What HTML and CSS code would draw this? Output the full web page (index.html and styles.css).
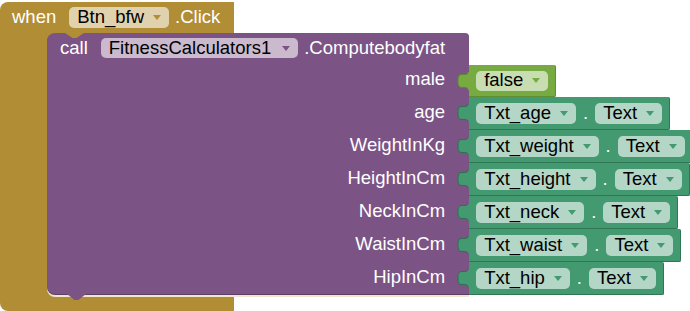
FILE: index.html
```html
<!DOCTYPE html>
<html>
<head>
<meta charset="utf-8">
<link rel="stylesheet" href="styles.css">
</head>
<body>
<div class="canvas">
  <div class="event">
    <div class="ev-head">
      <span class="lbl">when</span>
      <span class="field f-gold">Btn_bfw<i class="arr"></i></span>
      <span class="lbl tight">.Click</span>
    </div>
    <div class="ev-body">
      <div class="arm"></div>
      <div class="call">
        <div class="call-head">
          <span class="lbl">call</span>
          <span class="field f-purple">FitnessCalculators1<i class="arr"></i></span>
          <span class="lbl tight">.Computebodyfat</span>
        </div>
        <div class="arg-lbl">male</div>
        <div class="arg-lbl">age</div>
        <div class="arg-lbl">WeightInKg</div>
        <div class="arg-lbl">HeightInCm</div>
        <div class="arg-lbl">NeckInCm</div>
        <div class="arg-lbl">WaistInCm</div>
        <div class="arg-lbl">HipInCm</div>
      </div>
      <div class="args">
        <div class="vb logic">
          <svg class="tab" width="13" height="18" viewBox="0 0 13 18"><path class="tf" d="M13 0 H11 C11 3 8 2.5 5 2.5 C1.5 2.5 1 5 1 9 C1 13 1.5 15.5 5 15.5 C8 15.5 11 15 11 18 H13 Z"/><path class="ts" d="M11 0 C11 3 8 2.5 5 2.5 C1.5 2.5 1 5 1 9 C1 13 1.5 15.5 5 15.5 C8 15.5 11 15 11 18"/></svg>
          <span class="field f-logic">false<i class="arr"></i></span>
        </div>
        <div class="vb getter">
          <svg class="tab" width="13" height="18" viewBox="0 0 13 18"><path class="tf" d="M13 0 H11 C11 3 8 2.5 5 2.5 C1.5 2.5 1 5 1 9 C1 13 1.5 15.5 5 15.5 C8 15.5 11 15 11 18 H13 Z"/><path class="ts" d="M11 0 C11 3 8 2.5 5 2.5 C1.5 2.5 1 5 1 9 C1 13 1.5 15.5 5 15.5 C8 15.5 11 15 11 18"/></svg>
          <span class="field f-get">Txt_age<i class="arr"></i></span><span class="dot">.</span><span class="field f-get">Text<i class="arr"></i></span>
        </div>
        <div class="vb getter">
          <svg class="tab" width="13" height="18" viewBox="0 0 13 18"><path class="tf" d="M13 0 H11 C11 3 8 2.5 5 2.5 C1.5 2.5 1 5 1 9 C1 13 1.5 15.5 5 15.5 C8 15.5 11 15 11 18 H13 Z"/><path class="ts" d="M11 0 C11 3 8 2.5 5 2.5 C1.5 2.5 1 5 1 9 C1 13 1.5 15.5 5 15.5 C8 15.5 11 15 11 18"/></svg>
          <span class="field f-get">Txt_weight<i class="arr"></i></span><span class="dot">.</span><span class="field f-get">Text<i class="arr"></i></span>
        </div>
        <div class="vb getter">
          <svg class="tab" width="13" height="18" viewBox="0 0 13 18"><path class="tf" d="M13 0 H11 C11 3 8 2.5 5 2.5 C1.5 2.5 1 5 1 9 C1 13 1.5 15.5 5 15.5 C8 15.5 11 15 11 18 H13 Z"/><path class="ts" d="M11 0 C11 3 8 2.5 5 2.5 C1.5 2.5 1 5 1 9 C1 13 1.5 15.5 5 15.5 C8 15.5 11 15 11 18"/></svg>
          <span class="field f-get">Txt_height<i class="arr"></i></span><span class="dot">.</span><span class="field f-get">Text<i class="arr"></i></span>
        </div>
        <div class="vb getter">
          <svg class="tab" width="13" height="18" viewBox="0 0 13 18"><path class="tf" d="M13 0 H11 C11 3 8 2.5 5 2.5 C1.5 2.5 1 5 1 9 C1 13 1.5 15.5 5 15.5 C8 15.5 11 15 11 18 H13 Z"/><path class="ts" d="M11 0 C11 3 8 2.5 5 2.5 C1.5 2.5 1 5 1 9 C1 13 1.5 15.5 5 15.5 C8 15.5 11 15 11 18"/></svg>
          <span class="field f-get">Txt_neck<i class="arr"></i></span><span class="dot">.</span><span class="field f-get">Text<i class="arr"></i></span>
        </div>
        <div class="vb getter">
          <svg class="tab" width="13" height="18" viewBox="0 0 13 18"><path class="tf" d="M13 0 H11 C11 3 8 2.5 5 2.5 C1.5 2.5 1 5 1 9 C1 13 1.5 15.5 5 15.5 C8 15.5 11 15 11 18 H13 Z"/><path class="ts" d="M11 0 C11 3 8 2.5 5 2.5 C1.5 2.5 1 5 1 9 C1 13 1.5 15.5 5 15.5 C8 15.5 11 15 11 18"/></svg>
          <span class="field f-get">Txt_waist<i class="arr"></i></span><span class="dot">.</span><span class="field f-get">Text<i class="arr"></i></span>
        </div>
        <div class="vb getter">
          <svg class="tab" width="13" height="18" viewBox="0 0 13 18"><path class="tf" d="M13 0 H11 C11 3 8 2.5 5 2.5 C1.5 2.5 1 5 1 9 C1 13 1.5 15.5 5 15.5 C8 15.5 11 15 11 18 H13 Z"/><path class="ts" d="M11 0 C11 3 8 2.5 5 2.5 C1.5 2.5 1 5 1 9 C1 13 1.5 15.5 5 15.5 C8 15.5 11 15 11 18"/></svg>
          <span class="field f-get">Txt_hip<i class="arr"></i></span><span class="dot">.</span><span class="field f-get">Text<i class="arr"></i></span>
        </div>
      </div>
    </div>
    <div class="ev-foot"></div>
  </div>
</div>
</body>
</html>
```

FILE: styles.css
```css
html, body {
  margin: 0;
  background: #ffffff;
}
body {
  font-family: "Liberation Sans", Arial, sans-serif;
  font-size: 18.5px;
  line-height: 1;
}
.canvas {
  padding-top: 2px;
}
.event {
  display: flex;
  flex-direction: column;
  align-items: flex-start;
}
.ev-head {
  display: flex;
  align-items: center;
  width: 234px;
  height: 31px;
  box-sizing: border-box;
  background: #b18e35;
  border-top-left-radius: 8px;
  padding: 0 12px 0 12px;
}
.lbl {
  color: #ffffff;
  white-space: nowrap;
}
.field {
  display: inline-flex;
  align-items: center;
  height: 21px;
  box-sizing: border-box;
  padding: 0 8px;
  border-radius: 5px;
  color: #000000;
  white-space: nowrap;
  margin-left: 13px;
}
.tight {
  margin-left: 6px;
}
.arr {
  display: inline-block;
  width: 0;
  height: 0;
  margin-left: 9px;
  border-left: 4px solid transparent;
  border-right: 4px solid transparent;
  border-top: 5px solid #888;
}
.f-gold {
  background: #e0d2ae;
}
.f-gold .arr {
  border-top-color: #b18e35;
}
.f-purple {
  background: #cbbace;
  height: 20px;
}
.f-purple .arr {
  border-top-color: #7c5385;
  margin-left: 11px;
}
.f-logic {
  background: #c9ddb3;
  height: 20px;
  margin-left: 0;
}
.f-logic .arr {
  border-top-color: #77ab41;
}
.f-get {
  background: #b4d6c6;
  margin-left: 0;
}
.f-get .arr {
  border-top-color: #439970;
}
.ev-body {
  display: flex;
  align-items: flex-start;
}
.arm {
  width: 55px;
  align-self: stretch;
  background: #b18e35;
}
.call {
  margin-left: -8px;
  position: relative;
  z-index: 1;
  background: #7c5385;
  border-radius: 8px 4px 0 8px;
  display: grid;
  grid-template-rows: 30px repeat(7, 33px);
  justify-items: end;
  padding: 0 24px 0 13px;
  box-shadow: 0 1px 0 #5e3d67, 0 3px 0 #efe6cf;
}
.call::before {
  content: "";
  position: absolute;
  top: 0;
  left: 18px;
  width: 19px;
  height: 5px;
  background: #b18e35;
  clip-path: polygon(0 0, 100% 0, 60% 100%, 40% 100%);
}
.call::after {
  content: "";
  position: absolute;
  bottom: -6px;
  left: 20px;
  width: 19px;
  height: 6px;
  background: #7c5385;
  clip-path: polygon(0 0, 100% 0, 60% 100%, 40% 100%);
}
.call-head {
  justify-self: start;
  display: flex;
  align-items: center;
}
.arg-lbl {
  color: #ffffff;
  display: flex;
  align-items: center;
  white-space: nowrap;
}
.args {
  position: relative;
  z-index: 2;
  display: flex;
  flex-direction: column;
  align-items: flex-start;
  padding-top: 31px;
}
.vb {
  position: relative;
  display: flex;
  align-items: center;
  height: 33px;
  box-sizing: border-box;
  padding: 0 7px;
  border-radius: 0 2px 2px 0;
}
.vb .tab {
  position: absolute;
  left: -12px;
  top: 7px;
}
.tab .ts {
  fill: none;
  stroke-width: 1;
}
.logic {
  background: #77ab41;
  height: 32px;
  margin-top: 1px;
  border-right: 1px solid #5f8d31;
  border-bottom: 1px solid #5f8d31;
}
.logic .tf {
  fill: #77ab41;
}
.logic .ts {
  stroke: #5a8a2c;
}
.getter {
  background: #439970;
  border-right: 1px solid #2f7654;
  border-bottom: 1px solid #2f7654;
}
.getter .tf {
  fill: #439970;
}
.getter .ts {
  stroke: #2c7050;
}
.dot {
  color: #ffffff;
  margin: 0 7px;
}
.ev-foot {
  width: 234px;
  height: 16px;
  background: #b18e35;
  border-bottom-left-radius: 8px;
}
```
